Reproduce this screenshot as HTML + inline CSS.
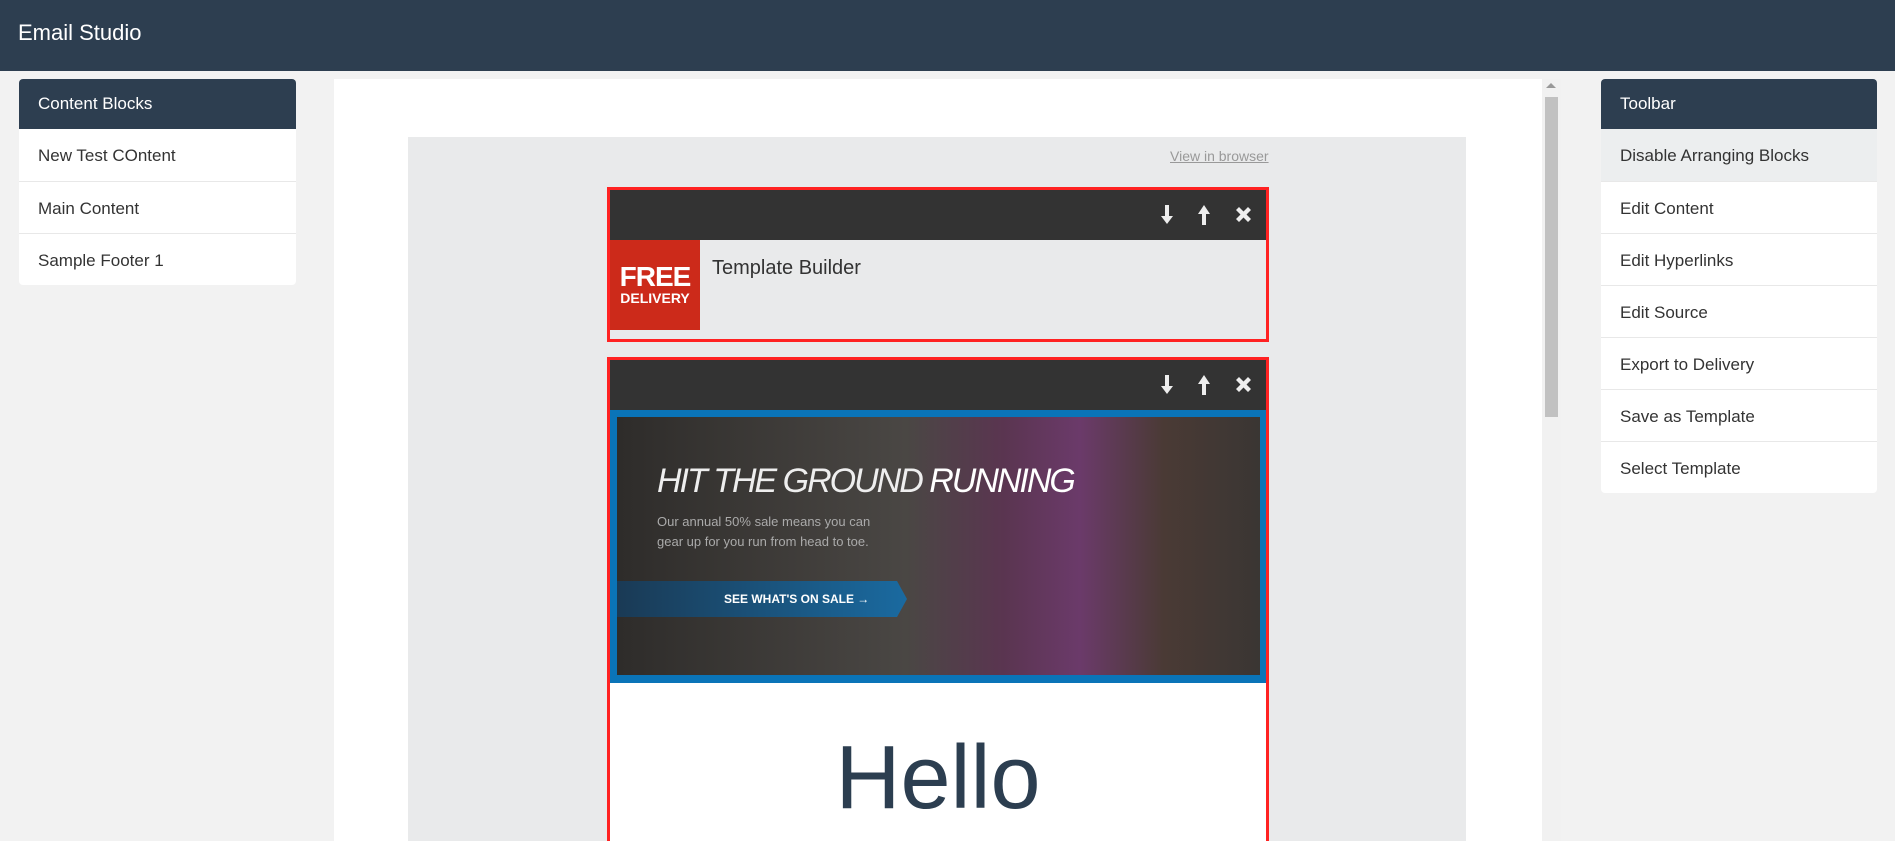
<!DOCTYPE html>
<html><head><style>
*{box-sizing:border-box;margin:0;padding:0}
html,body{width:1895px;height:841px;overflow:hidden}
body{background:#f2f2f2;font-family:"Liberation Sans",sans-serif;position:relative}
.hdr{position:absolute;left:0;top:0;width:1895px;height:71px;background:#2d3e50;color:#fff;font-size:22px;padding:20px 0 0 18px}
.panel{position:absolute;top:79px;background:#fff;border-radius:4px;overflow:hidden}
.panel .ph{background:#2d3e50;color:#fff;height:50px;font-size:17px;padding:15px 19px}
.panel .it{height:52px;border-top:1px solid #e8e8e8;font-size:17px;color:#333;padding:17px 19px 0}
.center{position:absolute;left:334px;top:79px;width:1208px;height:800px;background:#fff}
.sb{position:absolute;left:1542px;top:79px;width:19px;height:800px;background:#f1f1f1}
.thumb{position:absolute;left:1545px;top:97px;width:13px;height:320px;background:#c1c1c1}
.mail{position:absolute;left:408px;top:137px;width:1058px;height:720px;background:#e9eaeb}
.vib{position:absolute;left:1170px;top:148px;font-size:14px;color:#999;text-decoration:underline}
.blk{position:absolute;left:607px;width:662px;border:3px solid #f22;background:#e9eaeb}
.bar{height:50px;background:#333;position:relative}
</style></head><body>
<div class="hdr">Email Studio</div>
<div class="panel" style="left:19px;width:277px">
<div class="ph">Content Blocks</div>
<div class="it" style="border-top:0">New Test COntent</div>
<div class="it">Main Content</div>
<div class="it">Sample Footer 1</div>
</div>
<div class="center"></div>
<div class="sb"></div><div class="thumb"></div>
<div style="position:absolute;left:1546px;top:83px;width:0;height:0;border:5px solid transparent;border-bottom:5px solid #999;border-top:0"></div>
<div class="mail"></div>
<div class="vib">View in browser</div>
<div class="blk" style="top:187px;height:155px">
<div class="bar">
<svg style="position:absolute;left:550px;top:14px" width="100" height="22" viewBox="0 0 100 22" fill="#eee"><path d="M5 1h4v11h4l-6 8-6-8h4z"/><path d="M42 21h4V10h4L44 1l-6 9h4z"/><path d="M76 5l3-3 4.5 4.5 4.5-4.5 3 3-4.5 4.5 4.5 4.5-3 3-4.5-4.5-4.5 4.5-3-3 4.5-4.5z" transform="translate(0,1)"/></svg>
</div>
<div style="position:absolute;left:0;top:50px;width:90px;height:90px;background:#cc2a1a;color:#fff;font-weight:bold;text-align:center;padding-top:24px"><div style="font-size:28px;line-height:26px;letter-spacing:-1px">FREE</div><div style="font-size:14px">DELIVERY</div></div>
<div style="position:absolute;left:102px;top:67px;font-size:20px;color:#333">Template Builder</div>
</div>
<div class="blk" style="top:357px;height:500px;background:#fff">
<div class="bar">
<svg style="position:absolute;left:550px;top:14px" width="100" height="22" viewBox="0 0 100 22" fill="#eee"><path d="M5 1h4v11h4l-6 8-6-8h4z"/><path d="M42 21h4V10h4L44 1l-6 9h4z"/><path d="M76 5l3-3 4.5 4.5 4.5-4.5 3 3-4.5 4.5 4.5 4.5-3 3-4.5-4.5-4.5 4.5-3-3 4.5-4.5z" transform="translate(0,1)"/></svg>
</div>
<div style="height:273px;background:#0a74b8;padding:7px 6px 7px 7px">
<div style="height:258px;background:linear-gradient(90deg,#2e2c2a 0%,#4a4744 45%,#5a3550 60%,#6b3a6a 72%,#4a3a35 85%,#3a3633 100%);position:relative;overflow:hidden">
<div style="position:absolute;left:40px;top:45px;color:#eee;font-size:34px;font-style:italic;letter-spacing:-2px;font-weight:300">HIT THE GROUND <b style="color:#fff">RUNNING</b></div>
<div style="position:absolute;left:40px;top:95px;color:#aaa;font-size:13px;line-height:20px">Our annual 50% sale means you can<br>gear up for you run from head to toe.</div>
<div style="position:absolute;left:0;top:164px;width:290px;height:36px;background:linear-gradient(90deg,#1a3a55,#1a6aa0);clip-path:polygon(0 0,280px 0,290px 50%,280px 100%,0 100%);color:#fff;font-size:12px;font-weight:bold;padding:11px 0 0 107px">SEE WHAT'S ON SALE →</div>
</div></div>
<div style="text-align:center;font-size:90px;color:#2c3e50;padding-top:44px">Hello</div>
</div>
<div class="panel" style="left:1601px;width:276px">
<div class="ph">Toolbar</div>
<div class="it" style="border-top:0;background:#eceeef">Disable Arranging Blocks</div>
<div class="it">Edit Content</div>
<div class="it">Edit Hyperlinks</div>
<div class="it">Edit Source</div>
<div class="it">Export to Delivery</div>
<div class="it">Save as Template</div>
<div class="it">Select Template</div>
</div>
</body></html>
